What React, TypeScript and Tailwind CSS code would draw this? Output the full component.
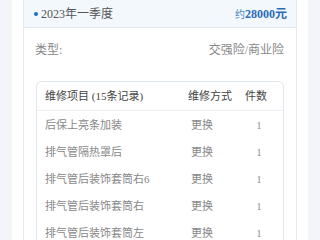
const rows = [
  { name: '后保上亮条加装', method: '更换', count: 1 },
  { name: '排气管隔热罩后', method: '更换', count: 1 },
  { name: '排气管后装饰套筒右6', method: '更换', count: 1 },
  { name: '排气管后装饰套筒右', method: '更换', count: 1 },
  { name: '排气管后装饰套筒左', method: '更换', count: 1 },
];

const font = { fontFamily: '"Liberation Serif", "Noto Sans CJK SC", serif' };

export default function App() {
  return (
    <div className="flex h-[240px] w-[320px] overflow-hidden bg-[#f3f5f8]" style={font}>
      <div className="ml-[12px] h-full w-[296px] bg-white px-[11px]">
        <div className="h-full border-x border-[#e4e9ef]">
          <div className="flex h-[28px] items-center justify-between border-b border-[#e4e9ef] bg-[#f3f8fd] pl-[10px] pr-[9px]">
            <div className="flex items-center text-[12px] text-[#555]">
              <span className="mr-[3px] h-[4px] w-[4px] rounded-full bg-[#1a6fc4]" />
              2023年一季度
            </div>
            <div className="flex items-baseline text-[#2a6bb5]">
              <span className="text-[10px] text-[#4a86c5]">约</span>
              <span className="text-[12px] font-bold">28000元</span>
            </div>
          </div>
          <div className="flex h-[44px] items-center justify-between pl-[11px] pr-[12px] text-[12px] text-[#888]">
            <span>类型:</span>
            <span>交强险/商业险</span>
          </div>
          <div className="mx-[12px] mt-[9px] rounded-[6px] border border-[#dfe6ed]">
            <div className="flex h-[29px] items-center border-b border-[#eef1f4] text-[11px] text-[#444]">
              <span className="w-[151px] pl-[8px]">维修项目 (15条记录)</span>
              <span className="w-[57px]">维修方式</span>
              <span>件数</span>
            </div>
            {rows.map((r) => (
              <div key={r.name} className="flex h-[27px] items-center pt-[1px] text-[11px] text-[#888]">
                <span className="w-[151px] pl-[8px]">{r.name}</span>
                <span className="w-[57px] pl-[3px]">{r.method}</span>
                <span className="w-[28px] text-center text-[10px]">{r.count}</span>
              </div>
            ))}
          </div>
        </div>
      </div>
    </div>
  );
}
